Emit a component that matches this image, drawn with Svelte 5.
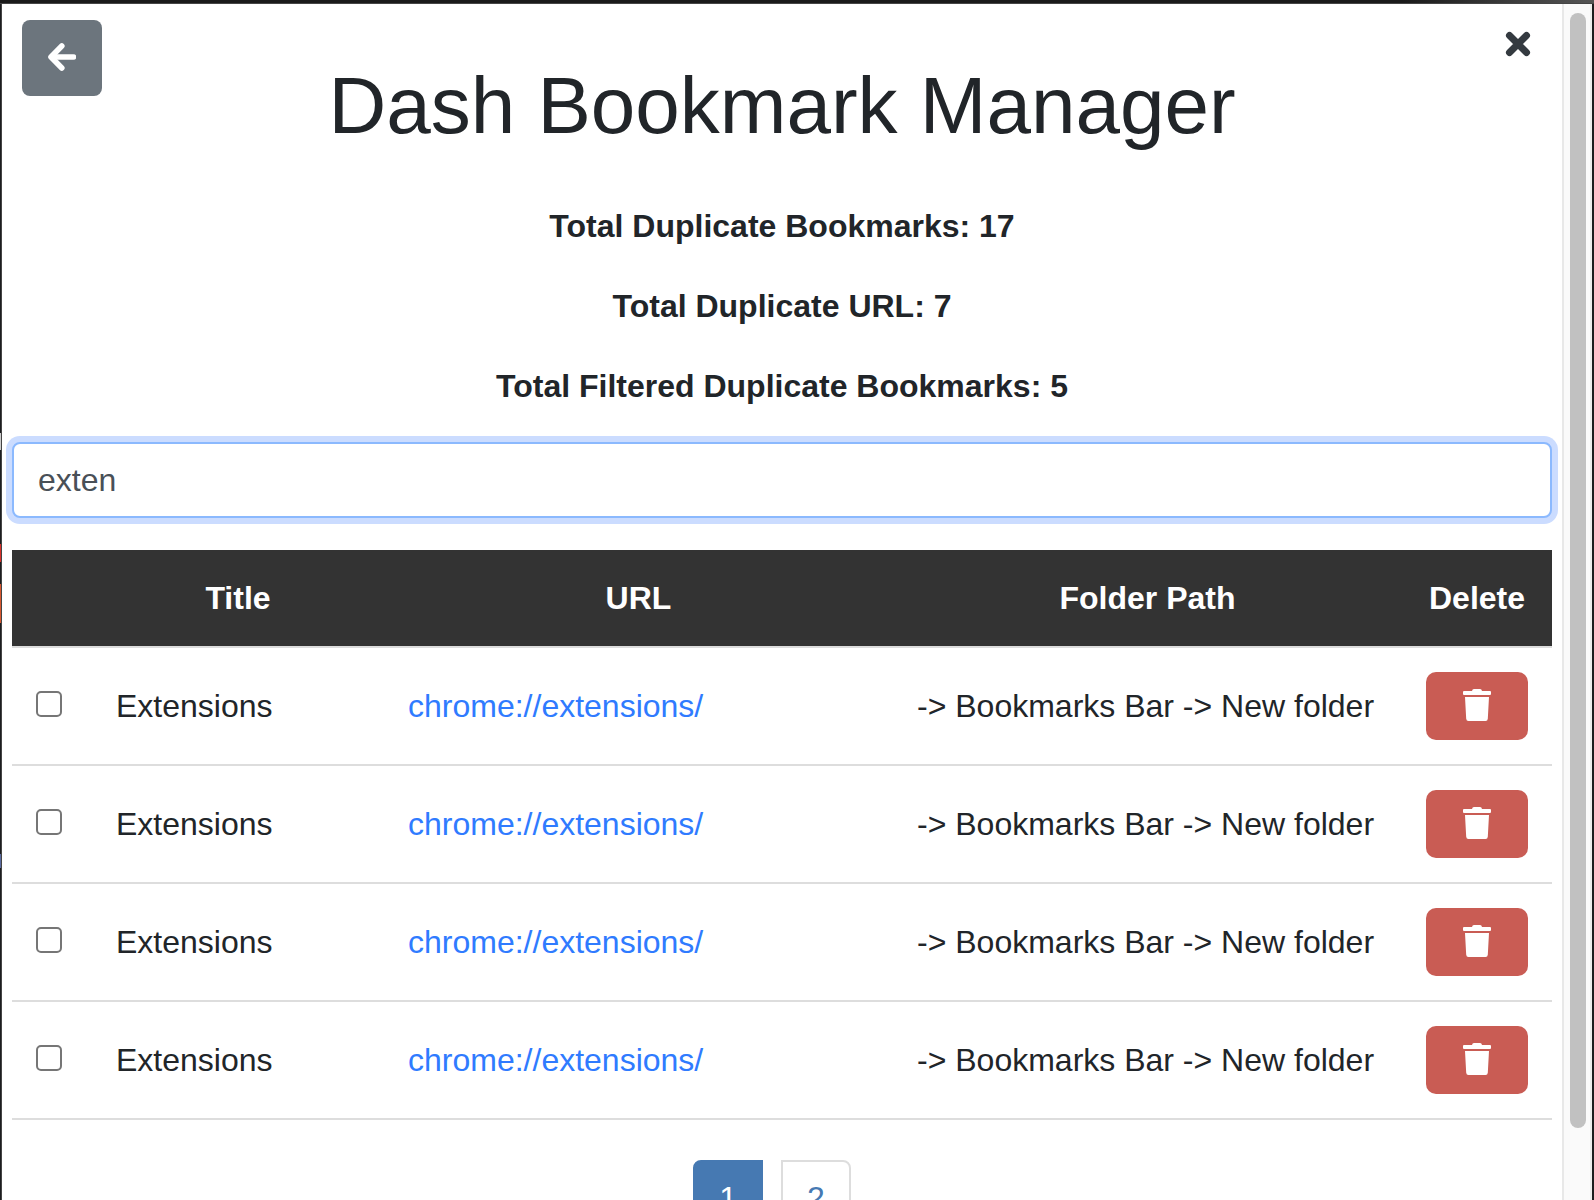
<script>
  let query = $state('exten');
  let page = $state(1);

  const stats = [
    { label: 'Total Duplicate Bookmarks', value: 17 },
    { label: 'Total Duplicate URL', value: 7 },
    { label: 'Total Filtered Duplicate Bookmarks', value: 5 },
  ];

  const bookmarks = [1, 2, 3, 4].map((id) => ({
    id,
    title: 'Extensions',
    url: 'chrome://extensions/',
    path: '-> Bookmarks Bar -> New folder',
  }));
</script>

<div class="window">
  <main>
    <header>
      <button class="back" aria-label="Back">
        <svg viewBox="0 0 28 28" width="28" height="28" aria-hidden="true">
          <path d="M25.500 14H6" fill="none" stroke="#fff" stroke-width="5.600" stroke-linecap="round" />
          <path d="M13.800 3 3 14l10.800 11" fill="none" stroke="#fff" stroke-width="5.600" stroke-linecap="round" stroke-linejoin="round" />
        </svg>
      </button>
      <h1>Dash Bookmark Manager</h1>
      <button class="close" aria-label="Close">
        <svg viewBox="0 0 26 26" width="26" height="26" aria-hidden="true">
          <path d="M4.500 4.500 21.500 21.500M21.500 4.500 4.500 21.500" fill="none" stroke="#343a40" stroke-width="7" stroke-linecap="round" />
        </svg>
      </button>
    </header>

    <section class="stats">
      {#each stats as s}
        <p>{s.label}: {s.value}</p>
      {/each}
    </section>

    <input class="search" type="text" aria-label="Filter bookmarks" bind:value={query} />

    <table>
      <thead>
        <tr>
          <th class="pick"></th>
          <th class="title">Title</th>
          <th>URL</th>
          <th>Folder Path</th>
          <th class="delete">Delete</th>
        </tr>
      </thead>
      <tbody>
        {#each bookmarks as b (b.id)}
          <tr>
            <td><input class="check" type="checkbox" aria-label="Select {b.title}" /></td>
            <td>{b.title}</td>
            <td><a href={b.url}>{b.url}</a></td>
            <td>{b.path}</td>
            <td>
              <button class="trash" aria-label="Delete {b.title}">
                <svg viewBox="0 0 28 32" width="28" height="32" aria-hidden="true">
                  <path d="M1 2h8q.3-2 2-2h6q1.700 0 2 2h8q1 0 1 1v2q0 1-1 1H1Q0 6 0 5V3Q0 2 1 2ZM2 8h24l-1.200 21.800q-.2 2.200-2.200 2.200H5.400q-2 0-2.200-2.200Z" fill="#fff" />
                </svg>
              </button>
            </td>
          </tr>
        {/each}
      </tbody>
    </table>

    <nav aria-label="Pages">
      {#each [1, 2] as n}
        <button class="page" class:active={page === n} onclick={() => (page = n)}>{n}</button>
      {/each}
    </nav>
  </main>

  <div class="track" aria-hidden="true"><div class="thumb"></div></div>
</div>

<style>
  /* The desktop behind the window shows as a thin rim with slivers of colour. */
  :global(body) {
    background:
      linear-gradient(#454545, #454545) 0 3px / 100% 1px no-repeat,
      linear-gradient(90deg, #1a1a1a 88%, #555) 0 0 / 100% 3px no-repeat,
      linear-gradient(#444, #444) 1px 0 / 1px 100% no-repeat,
      linear-gradient(#ccc, #ccc) 0 433px / 1px 17px no-repeat,
      linear-gradient(#d8302a, #d8302a) 0 544px / 1px 18px no-repeat,
      linear-gradient(#d8572f, #d8572f) 0 584px / 1px 39px no-repeat,
      linear-gradient(#5a6aa0, #5a6aa0) 0 854px / 1px 14px no-repeat,
      #1c1d1f;
  }

  .window,
  .window * {
    box-sizing: border-box;
  }

  .window {
    display: flex;
    height: 100vh;
    overflow: hidden;
    border: 2px solid transparent;
    border-width: 4px 2px 0;
    background: #fff;
    background-clip: padding-box;
    color: #212529;
    font: 32px/48px 'Liberation Sans', Arial, sans-serif;
  }

  button,
  input {
    font: inherit;
  }

  button {
    cursor: pointer;
  }

  svg {
    display: block;
  }

  main {
    flex: 1;
    min-width: 0;
    padding: 16px 10px;
  }

  header {
    display: grid;
    grid-template-columns: 1fr auto 1fr;
    align-items: start;
    padding: 0 10px;
  }

  .back {
    display: grid;
    place-items: center;
    width: 80px;
    height: 76px;
    padding: 0 0 2px;
    border: 0;
    border-radius: 8px;
    background: #6c757d;
  }

  .close {
    justify-self: end;
    padding: 11px;
    border: 0;
    background: none;
  }

  h1 {
    margin: 38px 0 0;
    font-size: 80px;
    font-weight: 400;
    line-height: 96px;
  }

  .stats {
    margin: 48px 0 32px;
    display: grid;
    gap: 32px;
    text-align: center;
    font-weight: 700;
  }

  p {
    margin: 0;
  }

  .search {
    display: block;
    width: 100%;
    height: 76px;
    margin-bottom: 32px;
    padding: 12px 24px;
    border: 2px solid #8bb9fe;
    border-radius: 8px;
    outline: 0;
    box-shadow: 0 0 0 6px #cbdcff;
    color: #495057;
  }

  table {
    width: 100%;
    table-layout: fixed;
    border-spacing: 0;
    border-bottom: 2px solid #ddd;
  }

  th {
    padding: 24px;
    background: #333;
    color: #fff;
    text-align: center;
  }

  .pick {
    width: 80px;
  }

  .title {
    width: 292px;
  }

  .delete {
    width: 150px;
  }

  td {
    padding: 24px;
    border-top: 2px solid #ddd;
    vertical-align: middle;
    white-space: nowrap;
  }

  a {
    color: #2f7bff;
    text-decoration: none;
  }

  .check {
    display: block;
    appearance: none;
    width: 26px;
    height: 26px;
    margin: 0 0 4px;
    border: 2px solid #767676;
    border-radius: 5px;
    background: #fff;
  }

  .check:checked {
    background: #2f7bff;
  }

  .trash {
    display: grid;
    place-items: center;
    width: 102px;
    height: 68px;
    padding: 0 0 2px;
    border: 0;
    border-radius: 10px;
    background: #c95c54;
  }

  nav {
    display: flex;
    justify-content: center;
    gap: 18px;
    margin: 40px 20px 0 0;
  }

  .page {
    padding: 12px 24px;
    border: 2px solid #ddd;
    background: #fff;
    color: #4679b2;
  }

  .page:first-child {
    border-radius: 8px 0 0 8px;
  }

  .page:last-child {
    border-radius: 0 8px 8px 0;
  }

  .page.active {
    border-color: #4679b2;
    background: #4679b2;
    color: #fff;
  }

  .track {
    width: 30px;
    padding: 9px 4px 72px 6px;
    border-left: 2px solid #e8e8e8;
    border-right: 2px solid #ededed;
    background: #fafafa;
  }

  .thumb {
    height: 100%;
    border-radius: 8px;
    background: #c1c1c1;
  }
</style>
